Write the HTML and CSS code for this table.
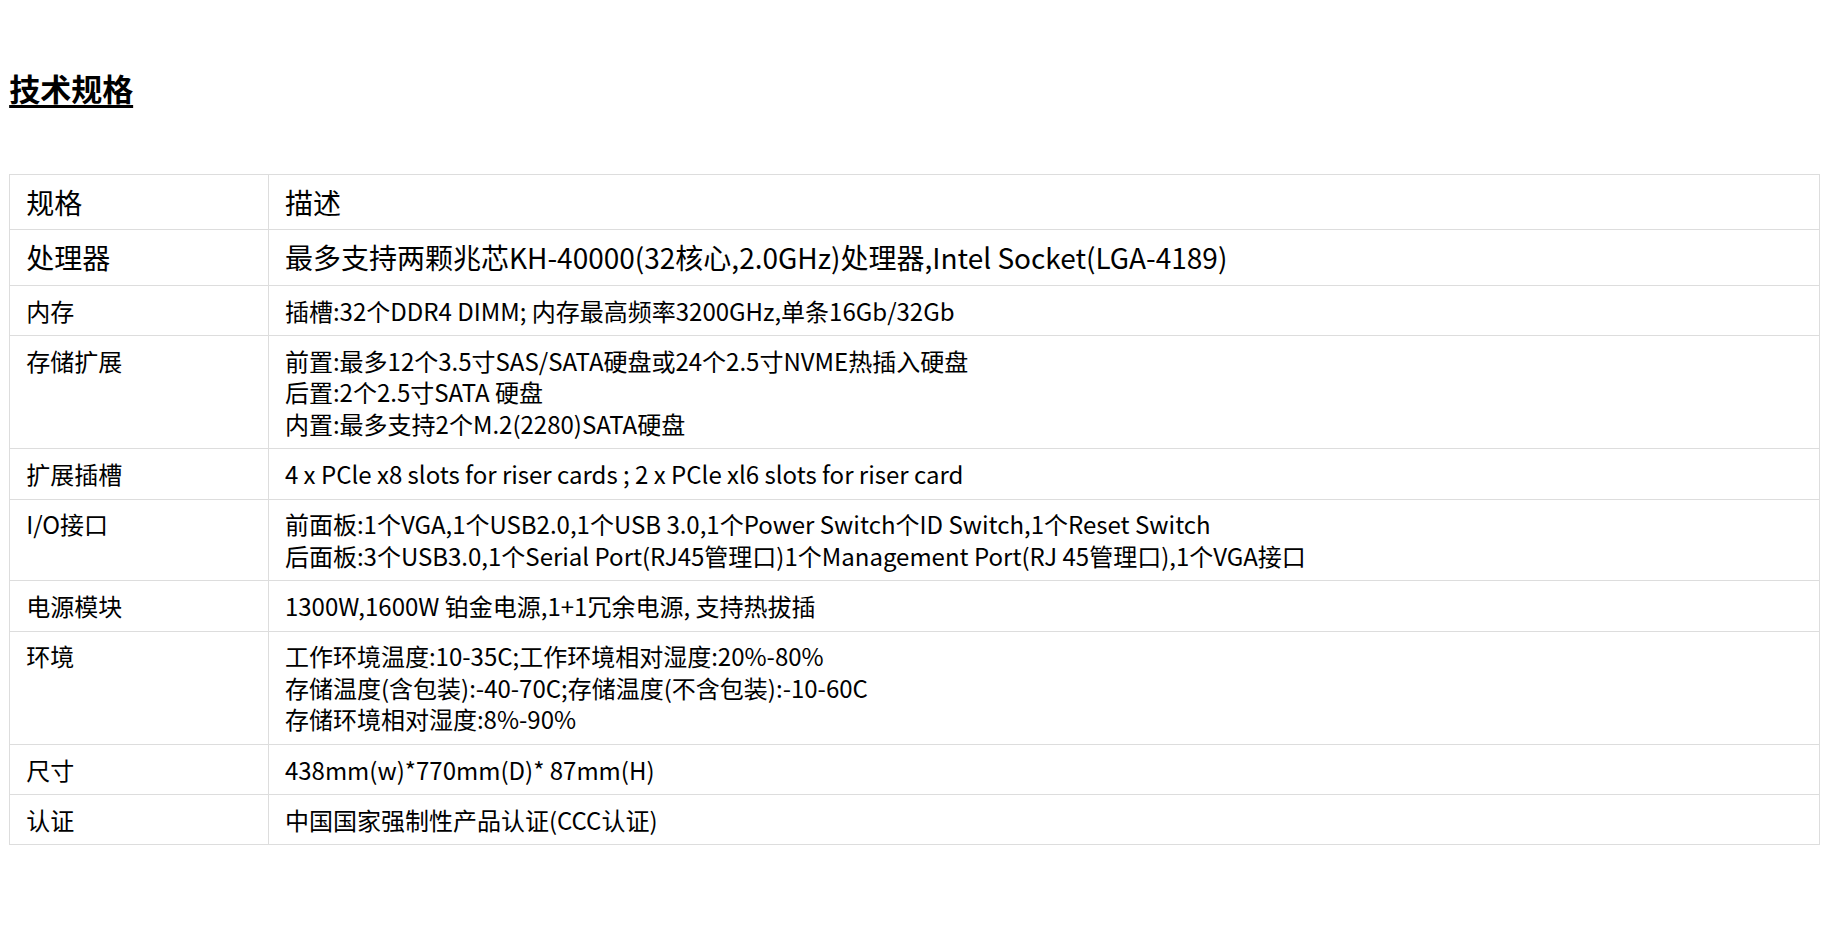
FILE: index.html
```html
<!DOCTYPE html>
<html lang="zh-CN">

<head>
    <meta charset="UTF-8">
    <meta name="viewport" content="width=device-width, initial-scale=1.0">
    <title>技术规格</title>
    <link rel="stylesheet" href="styles.css">
</head>

<body>
    <div class="content">
        <h2 class="section-title">技术规格</h2>

        <table class="spec-table">
            <thead>
                <tr class="row-lg">
                    <td class="spec-name">规格</td>
                    <td>描述</td>
                </tr>
                <tr class="row-lg">
                    <td class="spec-name">处理器</td>
                    <td>最多支持两颗兆芯KH-40000(32核心,2.0GHz)处理器,Intel Socket(LGA-4189)</td>
                </tr>
            </thead>
            <tbody>
                <tr>
                    <td class="spec-name">内存</td>
                    <td>插槽:32个DDR4 DIMM; 内存最高频率3200GHz,单条16Gb/32Gb</td>
                </tr>
                <tr>
                    <td class="spec-name">存储扩展</td>
                    <td>前置:最多12个3.5寸SAS/SATA硬盘或24个2.5寸NVME热插入硬盘<br>后置:2个2.5寸SATA 硬盘<br>内置:最多支持2个M.2(2280)SATA硬盘</td>
                </tr>
                <tr>
                    <td class="spec-name">扩展插槽</td>
                    <td>4 x PCle x8 slots for riser cards ; 2 x PCle xl6 slots for riser card</td>
                </tr>
                <tr>
                    <td class="spec-name">I/O接口</td>
                    <td>前面板:1个VGA,1个USB2.0,1个USB 3.0,1个Power Switch个ID Switch,1个Reset Switch<br>后面板:3个USB3.0,1个Serial Port(RJ45管理口)1个Management Port(RJ 45管理口),1个VGA接口</td>
                </tr>
                <tr>
                    <td class="spec-name">电源模块</td>
                    <td>1300W,1600W 铂金电源,1+1冗余电源, 支持热拔插</td>
                </tr>
                <tr>
                    <td class="spec-name">环境</td>
                    <td>工作环境温度:10-35C;工作环境相对湿度:20%-80%<br>存储温度(含包装):-40-70C;存储温度(不含包装):-10-60C<br>存储环境相对湿度:8%-90%</td>
                </tr>
                <tr>
                    <td class="spec-name">尺寸</td>
                    <td>438mm(w)*770mm(D)* 87mm(H)</td>
                </tr>
                <tr>
                    <td class="spec-name">认证</td>
                    <td>中国国家强制性产品认证(CCC认证)</td>
                </tr>
            </tbody>
        </table>
    </div>
</body>

</html>
```

FILE: styles.css
```css
body {
    font-family: "Noto Sans CJK SC", sans-serif;
    background-color: #ffffff;
    color: #000;
    margin: 0;
    padding: 0;
}

.content {
    width: 99%;
    margin: 0 auto;
}

.section-title {
    margin: 66px 0 0 0;
    font-size: 31px;
    line-height: 44px;
    font-weight: bold;
    text-decoration: underline;
    text-underline-offset: 4px;
}

.spec-table {
    width: 100%;
    margin-top: 64px;
    border-collapse: collapse;
    font-size: 24px;
    line-height: 31.6px;
}

.spec-table td {
    border: 1px solid #dddddd;
    padding: 8.8px 16px;
    vertical-align: top;
    text-align: left;
}

.spec-table .spec-name {
    width: 14.3%;
}

.spec-table .row-lg td {
    font-size: 28px;
    line-height: 36.8px;
}
```
